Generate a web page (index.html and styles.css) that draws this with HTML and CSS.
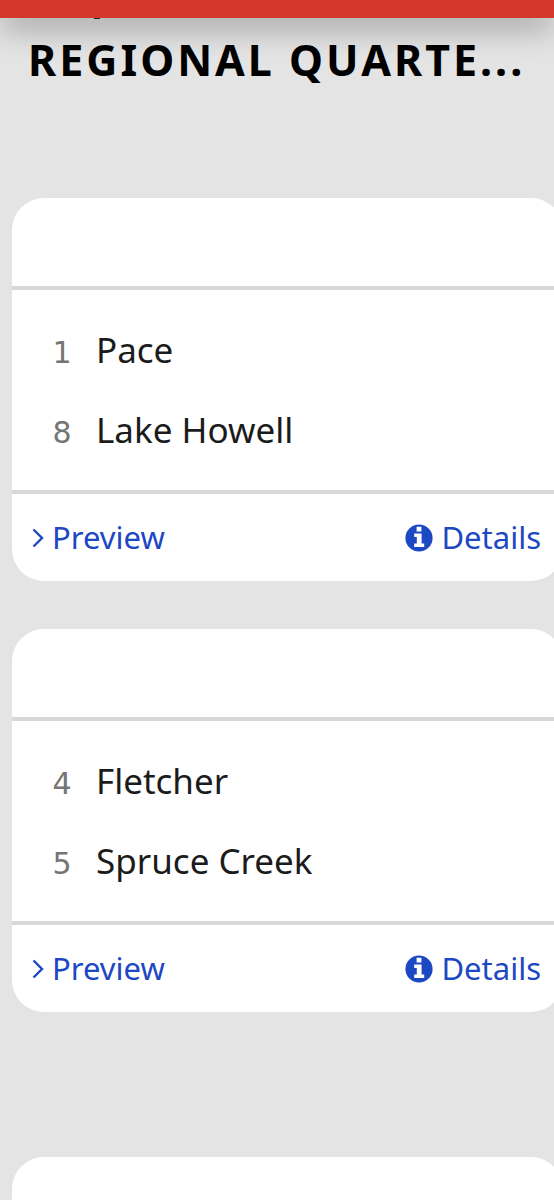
FILE: index.html
```html
<!DOCTYPE html>
<html lang="en">
<head>
  <meta charset="UTF-8" />
  <meta name="viewport" content="width=device-width, initial-scale=1.0" />
  <title>Bracket</title>
  <link rel="stylesheet" href="styles.css">
</head>
<body>
  <header class="top-bar"></header>

  <main class="bracket">
    <h1 class="round-title">REGIONAL QUARTE...</h1>

    <section class="pairing">
      <article class="game">
        <div class="game-header"></div>
        <ul class="teams">
          <li class="team"><span class="seed">1</span><span class="name">Pace</span></li>
          <li class="team"><span class="seed">8</span><span class="name">Lake Howell</span></li>
        </ul>
        <div class="game-links">
          <a href="#preview-1">
            <svg class="chevron" viewBox="0 0 12 20" aria-hidden="true"><path d="M1.5 1.5 L10 10 L1.5 18.5" /></svg>
            Preview
          </a>
          <a href="#details-1">
            <svg class="info" viewBox="0 0 28 28" aria-hidden="true">
              <circle cx="14" cy="14" r="13.6" />
              <path d="M11.6 2.8h4.8v4.6h-4.8z M9.2 9.4h7.4v10h2.6v3.6H9.2v-3.6h2.6v-6.4H9.2z" />
            </svg>
            Details
          </a>
        </div>
      </article>

      <article class="game">
        <div class="game-header"></div>
        <ul class="teams">
          <li class="team"><span class="seed">4</span><span class="name">Fletcher</span></li>
          <li class="team"><span class="seed">5</span><span class="name">Spruce Creek</span></li>
        </ul>
        <div class="game-links">
          <a href="#preview-2">
            <svg class="chevron" viewBox="0 0 12 20" aria-hidden="true"><path d="M1.5 1.5 L10 10 L1.5 18.5" /></svg>
            Preview
          </a>
          <a href="#details-2">
            <svg class="info" viewBox="0 0 28 28" aria-hidden="true">
              <circle cx="14" cy="14" r="13.6" />
              <path d="M11.6 2.8h4.8v4.6h-4.8z M9.2 9.4h7.4v10h2.6v3.6H9.2v-3.6h2.6v-6.4H9.2z" />
            </svg>
            Details
          </a>
        </div>
      </article>
    </section>

    <section class="pairing">
      <article class="game">
        <div class="game-header"></div>
      </article>
    </section>
  </main>
</body>
</html>
```
FILE: styles.css
```css
*, *::before, *::after { box-sizing: border-box; }

body { margin: 0; height: 100vh; overflow: hidden; display: flex; flex-direction: column; background: #e4e4e4; color: #1b1b1b; font-family: "Noto Sans", "Open Sans", sans-serif; }

/* Bar at the top, casting a shadow over the bracket */
.top-bar { flex: none; height: 18px; background: #d3382a; position: relative; box-shadow: 0 8px 32px rgba(0,0,0,0.4); }
.top-bar::after { content: ''; position: absolute; left: 94px; top: 100%; width: 6px; height: 1px; background: #222; }

/* Round column, a little wider than the screen */
.bracket { flex: 1; min-height: 0; overflow: hidden; margin-right: -9px; padding-left: 12px; }
.round-title { margin: 0; padding: 12px 16px 0; font-size: 43px; line-height: 60px; font-weight: 700; letter-spacing: 3px; color: #000; white-space: nowrap; }
.round-title + .pairing { margin-top: 108px; }
.pairing { display: flex; flex-direction: column; gap: 48px; margin-bottom: 145px; }

/* Game card */
.game { background: #fff; border-radius: 32px; }
.game-header { height: 88px; }
.teams { margin: 0; padding: 20px 40px; list-style: none; border-top: 4px solid #d8d8d8; border-bottom: 4px solid #d8d8d8; }
.team { display: flex; align-items: baseline; gap: 24px; height: 80px; line-height: 80px; }
.seed { width: 20px; text-align: center; font-family: "DejaVu Sans", sans-serif; font-size: 30px; color: #757575; }
.name { font-size: 35px; }

.game-links { display: flex; justify-content: space-between; padding: 0 22px 0 20px; line-height: 87px; font-size: 31px; }
.game-links a { display: flex; align-items: center; gap: 8px; color: #1d48c4; text-decoration: none; }
.chevron { width: 12px; height: 20px; fill: none; stroke: #1d48c4; stroke-width: 2.4; }
.info { width: 28px; height: 28px; }
.info circle { fill: #1d48c4; }
.info path { fill: #fff; }
```
